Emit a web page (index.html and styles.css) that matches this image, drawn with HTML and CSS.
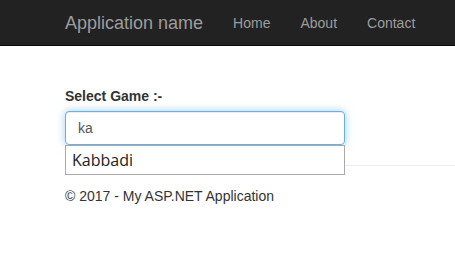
FILE: index.html
```html
<!DOCTYPE html>
<html lang="en">
<head>
    <meta charset="UTF-8">
    <meta name="viewport" content="width=device-width, initial-scale=1.0">
    <title>Select Game - My ASP.NET Application</title>
    <link rel="stylesheet" href="styles.css">
</head>
<body>
    <div class="navbar">
        <div class="container nav-inner">
            <a class="brand" href="#">Application name</a>
            <ul class="nav">
                <li><a href="#">Home</a></li>
                <li><a href="#">About</a></li>
                <li><a href="#">Contact</a></li>
            </ul>
        </div>
    </div>

    <div class="container body-content">
        <div class="form-group">
            <label for="gameInput">Select Game :-</label>
            <div class="autocomplete">
                <input type="text" id="gameInput" class="form-control focused" value="ka">
                <ul class="ui-menu">
                    <li>Kabbadi</li>
                </ul>
            </div>
        </div>

        <hr>
        <footer>
            <p>&copy; 2017 - My ASP.NET Application</p>
        </footer>
    </div>
</body>
</html>
```

FILE: styles.css
```css
* {
    box-sizing: border-box;
}

body {
    margin: 0;
    font-family: "Liberation Sans", Arial, sans-serif;
    font-size: 14px;
    line-height: 20px;
    color: #333;
    background: #fff;
}

.container {
    padding-left: 65px;
}

.navbar {
    background: #222;
    border-bottom: 1px solid #080808;
    height: 46px;
}

.nav-inner {
    display: flex;
    align-items: center;
    height: 45px;
}

.brand {
    font-size: 18px;
    color: #9d9d9d;
    text-decoration: none;
    margin-right: 30px;
}

.nav {
    display: flex;
    gap: 30px;
    list-style: none;
    margin: 0;
    padding: 0;
}

.nav a {
    color: #9d9d9d;
    text-decoration: none;
}

.body-content {
    padding-top: 40px;
}

.form-group label {
    display: block;
    font-weight: bold;
    margin-bottom: 5px;
}

.autocomplete {
    position: relative;
    width: 280px;
}

.form-control {
    display: block;
    width: 280px;
    height: 34px;
    padding: 6px 12px;
    font-family: inherit;
    font-size: 14px;
    color: #555;
    background: #fff;
    border: 1px solid #ccc;
    border-radius: 4px;
    outline: none;
}

.form-control.focused,
.form-control:focus {
    border-color: #66afe9;
    box-shadow: inset 0 1px 1px rgba(0, 0, 0, 0.075), 0 0 8px rgba(102, 175, 233, 0.6);
}

.ui-menu {
    position: absolute;
    top: 34px;
    left: 0;
    width: 280px;
    margin: 0;
    padding: 0;
    list-style: none;
    background: #fff;
    border: 1px solid #aaa;
    z-index: 10;
}

.ui-menu li {
    height: 28px;
    padding: 0 6px;
    font-family: "Open Sans", "DejaVu Sans", sans-serif;
    font-size: 16px;
    line-height: 28px;
    color: #222;
}

hr {
    margin: 20px 0;
    border: 0;
    border-top: 1px solid #eee;
}

footer p {
    margin: 0;
}
```
